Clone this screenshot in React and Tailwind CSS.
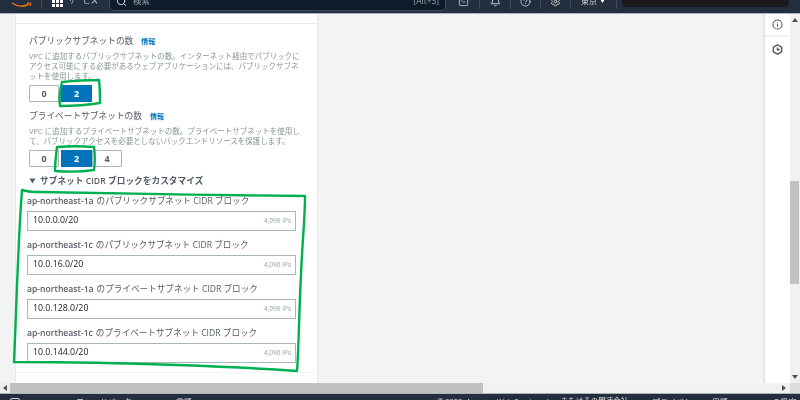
import React from "react";
import { Bell, CircleHelp, Settings, SquareTerminal, Search, Info } from "lucide-react";

const font = { fontFamily: '"Open Sans","Noto Sans CJK JP",sans-serif' };

function Tri({ dir }) {
  const d = { up: "M1 6 L4 2 L7 6 Z", down: "M1 2 L7 2 L4 6 Z", left: "M6 1 L6 7 L2 4 Z", right: "M2 1 L2 7 L6 4 Z" }[dir];
  return (
    <svg width="8" height="8" viewBox="0 0 8 8" className="text-[#505050]">
      <path d={d} fill="currentColor" />
    </svg>
  );
}

function Sep() {
  return <div className="h-[16px] w-px bg-[#414d5c]" />;
}

function Header() {
  return (
    <header className="h-[14px] shrink-0 overflow-hidden bg-[#232f3e] border-b border-[#aab7b8]">
      <div className="-mt-[14px] flex h-[30px] items-center text-[#d5dbdb]">
        <div className="relative ml-[11px] h-[30px] w-[20px]">
          <span className="absolute left-[2px] top-[2px] text-[13px] font-bold leading-[14px] text-white">aws</span>
          <svg className="absolute left-0 top-[15px]" width="21" height="8" viewBox="0 0 21 8">
            <path d="M1 2 Q10 8 18 3" stroke="#ec7211" strokeWidth="1.5" fill="none" />
            <path d="M16 2 L20 2 L19 5" stroke="#ec7211" strokeWidth="1" fill="none" />
          </svg>
        </div>
        <div className="ml-[10px]"><Sep /></div>
        <svg className="ml-[10px]" width="11" height="11" viewBox="0 0 11 11" fill="#fff">
          <rect x="0" y="0" width="3" height="3" /><rect x="4" y="0" width="3" height="3" /><rect x="8" y="0" width="3" height="3" />
          <rect x="0" y="4" width="3" height="3" /><rect x="4" y="4" width="3" height="3" /><rect x="8" y="4" width="3" height="3" />
          <rect x="0" y="8" width="3" height="3" /><rect x="4" y="8" width="3" height="3" /><rect x="8" y="8" width="3" height="3" />
        </svg>
        <span className="ml-[5px] w-[40px] text-[7.5px] leading-none">サービス</span>
        <div className="ml-[1px] flex h-[20px] w-[337px] items-center rounded-sm border border-[#414d5c] bg-[#0f1b2a] pl-[6px] pr-[6px]">
          <Search size={11} strokeWidth={2} className="text-[#d5dbdb]" />
          <span className="ml-[6px] flex-1 text-[8.5px] text-[#95a5a6]">検索</span>
          <span className="text-[8.5px] text-[#95a5a6]">[Alt+S]</span>
        </div>
        <div className="ml-[11px] flex w-[12px] justify-center"><SquareTerminal size={11} strokeWidth={1.6} /></div>
        <div className="ml-[10px]"><Sep /></div>
        <div className="ml-[9px] flex w-[12px] justify-center"><Bell size={11} strokeWidth={2} /></div>
        <div className="ml-[9px]"><Sep /></div>
        <div className="ml-[8px] flex w-[12px] justify-center"><CircleHelp size={11} strokeWidth={1.8} /></div>
        <div className="ml-[9px]"><Sep /></div>
        <div className="ml-[8px] flex w-[12px] justify-center"><Settings size={11} strokeWidth={1.8} /></div>
        <div className="ml-[9px]"><Sep /></div>
        <span className="ml-[10px] text-[8px] leading-none">東京</span>
        <svg className="ml-[2px]" width="7" height="6" viewBox="0 0 7 6"><path d="M1 1 H6 L3.5 5 Z" fill="#fff" /></svg>
        <div className="ml-[10px]"><Sep /></div>
        <div className="ml-[5px] h-[12px] w-[167px] rounded-[4px] bg-[#1b1b1b]" />
      </div>
    </header>
  );
}

function Toggle({ items }) {
  return (
    <div className="flex">
      {items.map((n, i) => (
        <div
          key={i}
          className={
            n === "2"
              ? "ml-[2px] flex h-[17px] w-[31px] items-center justify-center bg-[#0073bb] text-[9px] font-bold text-white"
              : "flex h-[17px] w-[30px] items-center justify-center rounded-[1px] border border-[#aab7b8] bg-white text-[9px] font-bold text-[#545b64]"
          }
        >
          {n}
        </div>
      ))}
    </div>
  );
}

function Count({ title, desc, items, mt }) {
  return (
    <section className={mt}>
      <div className="flex h-[14px] items-center text-[8.7px] leading-none text-[#545b64]">
        <span>{title}</span>
        <span className="ml-[8px] text-[7px] font-semibold text-[#0073bb]">情報</span>
      </div>
      <p className="mt-[3px] w-[273px] text-[7.5px] leading-[10px] text-[#879596]">{desc}</p>
      <div className="mt-[4px]"><Toggle items={items} /></div>
    </section>
  );
}

function Cidr({ label, rest, value }) {
  return (
    <div className="mb-[4px]">
      <div className="flex h-[20px] items-center text-[8.6px] leading-none text-[#545b64]">
        <span className="font-semibold">{label}</span>
        <span className="ml-[3px]">{rest}</span>
      </div>
      <div className="flex h-[20px] w-[269px] items-center justify-between border border-[#aab7b8] bg-white pl-[5px] pr-[4px]">
        <span className="text-[8.8px] text-[#16191f]">{value}</span>
        <span className="text-[6.5px] text-[#95a5a6]">4,096 IPs</span>
      </div>
    </div>
  );
}

function Card() {
  return (
    <div className="ml-[15px] h-full w-[303px] shrink-0 border-x border-[#e4e8e8] bg-white">
      <div className="h-[10px] border-b border-[#eaeded]" />
      <div className="pl-[13px] pt-[10px]">
        <Count
          title="パブリックサブネットの数"
          desc="VPC に追加するパブリックサブネットの数。インターネット経由でパブリックにアクセス可能にする必要があるウェブアプリケーションには、パブリックサブネットを使用します。"
          items={["0", "2"]}
        />
        <Count
          mt="mt-[7px]"
          title="プライベートサブネットの数"
          desc="VPC に追加するプライベートサブネットの数。プライベートサブネットを使用して、パブリックアクセスを必要としないバックエンドリソースを保護します。"
          items={["0", "2", "4"]}
        />
        <div className="mt-[7px] flex h-[14px] items-center text-[8.7px] font-semibold leading-none text-[#545b64]">
          <svg width="7" height="6" viewBox="0 0 7 6"><path d="M0.5 0.5 H6.5 L3.5 5.5 Z" fill="#545b64" /></svg>
          <span className="ml-[4px]">サブネット CIDR ブロックをカスタマイズ</span>
        </div>
      </div>
      <div className="pl-[11px] pt-[3px]">
        <Cidr label="ap-northeast-1a" rest="のパブリックサブネット CIDR ブロック" value="10.0.0.0/20" />
        <Cidr label="ap-northeast-1c" rest="のパブリックサブネット CIDR ブロック" value="10.0.16.0/20" />
        <Cidr label="ap-northeast-1a" rest="のプライベートサブネット CIDR ブロック" value="10.0.128.0/20" />
        <Cidr label="ap-northeast-1c" rest="のプライベートサブネット CIDR ブロック" value="10.0.144.0/20" />
      </div>
      <div className="mt-[9px] border-t border-[#f2f3f3]" />
    </div>
  );
}

function Sidebar() {
  return (
    <aside className="w-[27px] shrink-0 border-l-2 border-[#e1e5e5] bg-white">
      <div className="flex h-[23px] items-center justify-center border-b-2 border-[#f2f3f3] text-[#545b64]">
        <Info size={11} strokeWidth={2.2} />
      </div>
      <div className="mt-[3px] flex h-[19px] items-center justify-center text-[#545b64]">
        <svg width="11" height="11" viewBox="0 0 12 12" fill="none" stroke="currentColor" strokeWidth="1.6">
          <path d="M6 1 L10.5 3.5 V8.5 L6 11 L1.5 8.5 V3.5 Z" />
          <path d="M6 3.8 V6.2 H8.4" />
        </svg>
      </div>
    </aside>
  );
}

function VScroll() {
  return (
    <div className="flex h-full w-[10px] shrink-0 flex-col bg-[#f1f1f1]">
      <div className="flex h-[12px] items-center justify-center"><Tri dir="up" /></div>
      <div className="mt-[155px] h-[103px] w-[9px] bg-[#c1c1c1]" />
      <div className="mt-auto flex h-[12px] items-center justify-center"><Tri dir="down" /></div>
    </div>
  );
}

function HScroll() {
  return (
    <div className="flex h-[10px] shrink-0 items-center bg-[#f1f1f1]">
      <div className="flex h-[10px] w-[10px] items-center justify-center bg-[#eeeeee]"><Tri dir="left" /></div>
      <div className="h-[10px] w-[473px] bg-[#c1c1c1]" />
      <div className="flex flex-1 justify-end pr-[2px]"><Tri dir="right" /></div>
      <div className="h-[10px] w-[10px] bg-[#dcdcdc]" />
    </div>
  );
}

function Footer() {
  return (
    <footer className="h-[7px] shrink-0 overflow-hidden border-t border-[#aab7b8] bg-[#232f3e]">
      <div className="flex h-[16px] items-center text-[8px] leading-none text-[#d5dbdb]">
        <span className="ml-[10px] h-[9px] w-[10px] rounded-[2px] border border-[#d5dbdb]" />
        <span className="ml-[7px] w-[49px]">CloudShell</span>
        <span className="w-[100px]">フィードバック</span>
        <span className="w-[261px]">言語</span>
        <span className="w-[215px] whitespace-nowrap text-[7.5px]">© 2023, Amazon Web Services, Inc. またはその関連会社。</span>
        <span className="w-[60px]">プライバシー</span>
        <span className="w-[33px]">用語</span>
        <span className="whitespace-nowrap">Cookie の設定</span>
      </div>
    </footer>
  );
}

function Annotations() {
  const s = { stroke: "#00b050", strokeWidth: 2.4, fill: "none", strokeLinejoin: "round", strokeLinecap: "round" };
  return (
    <svg className="pointer-events-none absolute left-0 top-0" width="800" height="400" viewBox="0 0 800 400">
      <path {...s} d="M62 82 C72 81 88 80 99 80 C100 88 100 96 100 103 C88 105 72 106 60 106 C59 98 60 90 62 82" />
      <path {...s} d="M57 147 C68 146 82 146 94 147 C95 155 95 163 94 170 C82 172 68 172 55 171 C55 163 56 155 57 147" />
      <path {...s} d="M22 190 C30 192 28 192 40 192 C120 194 220 195 305 196 C305 220 302 245 301 275 C299 310 299 345 297 371 C240 367 130 362 14 362 C16 320 18 240 22 190" />
    </svg>
  );
}

export default function App() {
  return (
    <div className="relative flex h-[400px] w-[800px] flex-col overflow-hidden bg-[#f2f3f3] blur-[0.4px]" style={font}>
      <Header />
      <div className="flex min-h-0 flex-1">
        <main className="min-w-0 flex-1 overflow-hidden bg-[#f2f3f3]"><Card /></main>
        <Sidebar />
        <VScroll />
      </div>
      <HScroll />
      <Footer />
      <Annotations />
    </div>
  );
}
